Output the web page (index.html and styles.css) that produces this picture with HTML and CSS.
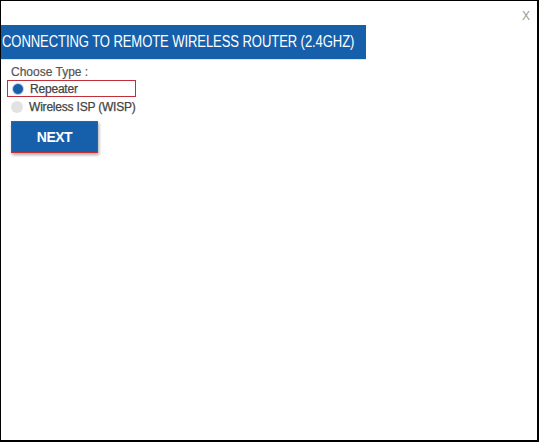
FILE: index.html
```html
<!DOCTYPE html>
<html>
<head>
<meta charset="utf-8">
<link rel="stylesheet" href="styles.css">
</head>
<body>
<div class="dialog">
  <div class="close">X</div>
  <div class="header"><span class="title">CONNECTING TO REMOTE WIRELESS ROUTER (2.4GHZ)</span></div>
  <div class="form">
    <div class="label">Choose Type :</div>
    <div class="option selected"><span class="radio on"></span><span class="opt-text">Repeater</span></div>
    <div class="option"><span class="radio"></span><span class="opt-text">Wireless ISP (WISP)</span></div>
    <button class="next">NEXT</button>
  </div>
</div>
</body>
</html>
```
FILE: styles.css
```css
html, body {
  margin: 0;
  padding: 0;
  background: #fff;
}
.dialog {
  position: relative;
  box-sizing: border-box;
  width: 539px;
  height: 442px;
  border: 1px solid #000;
  border-right-width: 2px;
  border-bottom-width: 2px;
  padding-top: 24px;
  font-family: "Liberation Sans", Arial, sans-serif;
}
.close {
  position: absolute;
  top: 8px;
  right: 7px;
  font-size: 12px;
  color: #999;
}
.header {
  width: 365px;
  height: 35px;
  box-sizing: border-box;
  background: #1660ab;
  color: #fff;
  line-height: 34px;
  padding-left: 1px;
  white-space: nowrap;
  border-bottom: 1px solid #d6e6f5;
  overflow: hidden;
}
.title {
  display: inline-block;
  font-size: 16px;
  letter-spacing: -0.1px;
  transform: scaleX(0.815);
  transform-origin: 0 50%;
}
.form {
  padding: 5px 0 0 6px;
  display: flex;
  flex-direction: column;
  align-items: flex-start;
}
.label {
  font-size: 12px;
  color: #555;
  margin-left: 4px;
  height: 15px;
  line-height: 15px;
  -webkit-text-stroke: 0.2px #555;
}
.option {
  display: flex;
  align-items: center;
  gap: 6px;
  height: 17px;
  box-sizing: border-box;
  width: 129px;
  padding-left: 4px;
  font-size: 12px;
  color: #444;
  letter-spacing: -0.2px;
  white-space: nowrap;
  -webkit-text-stroke: 0.25px #444;
}
.option.selected {
  border: 1px solid #c0303a;
  padding-left: 4px;
  margin-bottom: 1px;
}
.radio {
  width: 12px;
  height: 12px;
  border-radius: 50%;
  background: #e2e2e2;
  flex: none;
}
.radio.on {
  width: 10px;
  height: 10px;
  background: #1660ab;
  border: 1px solid #c6d6e8;
}
.next {
  margin: 6px 0 0 4px;
  width: 87px;
  height: 32px;
  background: #1660ab;
  border: 1px solid #c0303a;
  color: #fff;
  font-family: "Liberation Sans", Arial, sans-serif;
  font-size: 14px;
  font-weight: bold;
  letter-spacing: -0.5px;
  box-shadow: 1px 2px 3px rgba(0,0,0,0.35);
  padding: 0;
}
```
